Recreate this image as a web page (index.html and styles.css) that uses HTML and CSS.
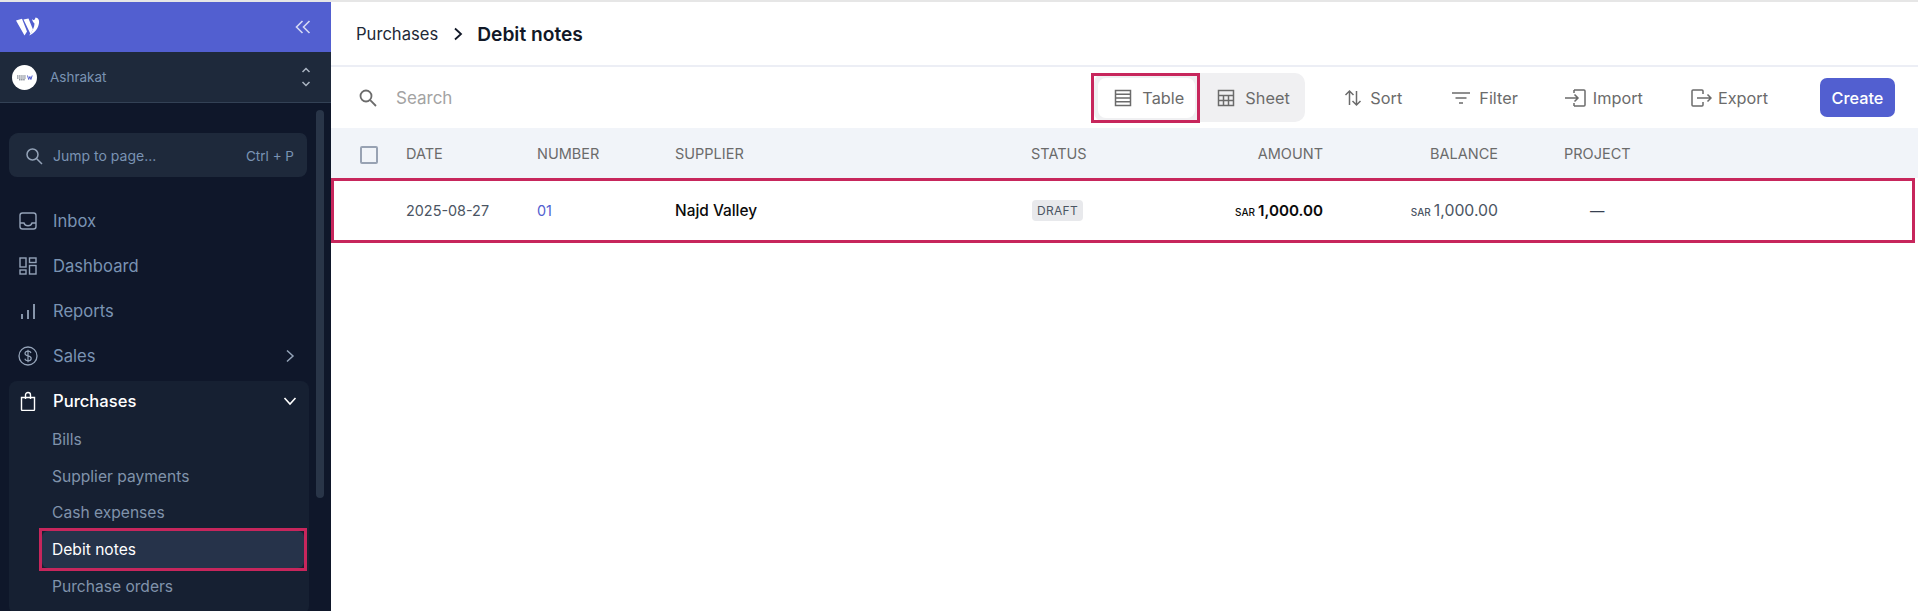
FILE: index.html
```html
<!DOCTYPE html>
<html lang="en">
<head>
  <meta charset="UTF-8" />
  <meta name="viewport" content="width=device-width, initial-scale=1.0"/>
  <title>Debit notes</title>
  <link rel="stylesheet" href="styles.css">
</head>
<body>
<div class="app">

  <!-- Sidebar -->
  <aside class="sidebar">
    <div class="brand">
      <svg class="logo" viewBox="0 0 24 20" width="24" height="20"><path d="M0 3.5 L6 1.800 L11 14.500 L8.500 18.500 Z M7.500 2.500 L12.500 1.500 L17 12.500 L14.500 17 Z" fill="#fff"/><path d="M16 2 C17.500 4 19 3 19.500 .5 C22 1 23.500 2.500 23 6 C22.400 11 19 16 13 18.500 C16.500 14.500 18.500 10 18.500 6.500 C17.500 6 16.300 4 16 2 Z" fill="#fff"/></svg>
      <svg class="collapse" viewBox="0 0 16 14" width="16" height="14"><path d="M7.5 1 L1.5 7 L7.5 13 M14.5 1 L8.5 7 L14.5 13" fill="none" stroke="#d5daf5" stroke-width="1.6"/></svg>
    </div>
    <div class="org">
      <span class="org-avatar">
        <svg viewBox="0 0 25 25" width="25" height="25"><circle cx="12.5" cy="12.5" r="12.5" fill="#fff"/><path d="M5 11h9M5 13h9M7 14.800h6" stroke="#555e6e" stroke-width="1" stroke-dasharray="1.500 .6"/><path d="M15.500 10.500l1.200 4 1.200-3 1 3 1.300-4" fill="none" stroke="#525fd0" stroke-width="1"/></svg>
      </span>
      <span class="org-name">Ashrakat</span>
      <svg class="org-switch" viewBox="0 0 10 22" width="10" height="22"><path d="M1.500 6 L5 2.500 L8.500 6 M1.500 16 L5 19.500 L8.500 16" fill="none" stroke="#aab4c2" stroke-width="1.500"/></svg>
    </div>

    <div class="side-body">
      <div class="scrollbar"></div>
      <div class="jump">
        <svg viewBox="0 0 20 20" width="20" height="20"><circle cx="8.500" cy="8.500" r="5.500" fill="none" stroke="#94a3b8" stroke-width="1.500"/><path d="M12.700 12.700 L18 18" stroke="#94a3b8" stroke-width="1.500"/></svg>
        <span class="jump-text">Jump to page...</span>
        <span class="jump-key">Ctrl + P</span>
      </div>

      <nav class="nav">
        <a class="nav-item">
          <svg viewBox="0 0 20 20" width="20" height="20"><rect x="2" y="2" width="16" height="16" rx="2.500" fill="none" stroke="#94a3b8" stroke-width="1.400"/><path d="M2 12h4c.6 2 2 2.800 4 2.800s3.400-.8 4-2.800h4" fill="none" stroke="#94a3b8" stroke-width="1.400"/></svg>
          <span>Inbox</span>
        </a>
        <a class="nav-item">
          <svg viewBox="0 0 20 20" width="20" height="20"><g fill="none" stroke="#94a3b8" stroke-width="1.400"><rect x="2" y="2" width="6" height="9"/><rect x="11.500" y="2" width="6.500" height="4.500"/><rect x="2" y="14" width="6" height="4"/><rect x="11.500" y="9.500" width="6.500" height="8.500"/></g></svg>
          <span>Dashboard</span>
        </a>
        <a class="nav-item">
          <svg viewBox="0 0 20 20" width="20" height="20"><path d="M4 13v5M10 9v9M16 3v15" stroke="#94a3b8" stroke-width="1.800"/></svg>
          <span>Reports</span>
        </a>
        <a class="nav-item">
          <svg viewBox="0 0 20 20" width="20" height="20"><circle cx="10" cy="10" r="9" fill="none" stroke="#94a3b8" stroke-width="1.300"/><path d="M13 7c-.4-1.200-1.500-1.800-3-1.800-1.800 0-3 .9-3 2.300 0 3.200 6.200 1.600 6.200 4.900 0 1.400-1.300 2.400-3.200 2.400-1.600 0-2.800-.7-3.200-2M10 3.800v12.400" fill="none" stroke="#94a3b8" stroke-width="1.200"/></svg>
          <span>Sales</span>
          <svg class="chev" viewBox="0 0 10 14" width="10" height="14"><path d="M2 1.500 L8 7 L2 12.500" fill="none" stroke="#94a3b8" stroke-width="1.500"/></svg>
        </a>
        <div class="nav-group">
          <a class="nav-item nav-open">
            <svg viewBox="0 0 20 20" width="20" height="20"><path d="M3.500 6.500h13v12a.9.900 0 0 1-.9.900H4.400a.9.900 0 0 1-.9-.9Z" fill="none" stroke="#fff" stroke-width="1.400"/><path d="M7.500 8V4a2.500 2.500 0 0 1 5 0v4" fill="none" stroke="#fff" stroke-width="1.400"/></svg>
            <span>Purchases</span>
            <svg class="chev" viewBox="0 0 14 10" width="14" height="10"><path d="M1.500 2 L7 8 L12.500 2" fill="none" stroke="#fff" stroke-width="1.600"/></svg>
          </a>
          <a class="sub-item">Bills</a>
          <a class="sub-item">Supplier payments</a>
          <a class="sub-item">Cash expenses</a>
          <a class="sub-item active marked">Debit notes</a>
          <a class="sub-item">Purchase orders</a>
        </div>
      </nav>
    </div>
  </aside>

  <!-- Main content -->
  <main class="main">
    <header class="crumbs">
      <span class="crumb">Purchases</span>
      <svg viewBox="0 0 10 14" width="10" height="14"><path d="M2 1.500 L8 7 L2 12.500" fill="none" stroke="#111827" stroke-width="1.800"/></svg>
      <span class="crumb-current">Debit notes</span>
    </header>

    <div class="toolbar">
      <svg class="search-icon" viewBox="0 0 20 20" width="20" height="20"><circle cx="8" cy="8" r="5.500" fill="none" stroke="#6b6b6b" stroke-width="1.800"/><path d="M12.200 12.200 L18 18" stroke="#6b6b6b" stroke-width="1.800"/></svg>
      <span class="search-text">Search</span>

      <div class="view-switch">
        <button class="view-btn selected marked">
          <svg viewBox="0 0 18 18" width="18" height="18"><g fill="none" stroke="#6b6b6b" stroke-width="1.500"><rect x="1.500" y="1.500" width="15" height="15"/><path d="M1.500 5.300h15M1.500 9h15M1.500 12.700h15"/></g></svg>
          Table
        </button>
        <button class="view-btn">
          <svg viewBox="0 0 18 18" width="18" height="18"><g fill="none" stroke="#6b6b6b" stroke-width="1.500"><rect x="1.500" y="1.500" width="15" height="15"/><path d="M1.500 6.500h15M1.500 11.500h15M6.500 6.500v10M11.500 6.500v10"/></g></svg>
          Sheet
        </button>
      </div>

      <button class="tool tool-sort">
        <svg viewBox="0 0 18 20" width="18" height="20"><path d="M5.500 17V3M1.500 7l4-4 4 4M12.500 3v14M8.500 13l4 4 4-4" fill="none" stroke="#6b6b6b" stroke-width="1.500"/></svg>
        Sort
      </button>
      <button class="tool tool-filter">
        <svg viewBox="0 0 18 14" width="18" height="14"><path d="M0 2h18M3.500 7h11M7 12h4" stroke="#6b6b6b" stroke-width="1.600"/></svg>
        Filter
      </button>
      <button class="tool tool-import">
        <svg viewBox="0 0 21 18" width="21" height="18"><path d="M9 1h10a1 1 0 0 1 1 1v14a1 1 0 0 1-1 1H9M9 1v3M9 14v3" fill="none" stroke="#6b6b6b" stroke-width="1.500"/><path d="M0 9h13M9.500 5.500 13 9l-3.500 3.500" fill="none" stroke="#6b6b6b" stroke-width="1.500"/></svg>
        Import
      </button>
      <button class="tool tool-export">
        <svg viewBox="0 0 21 18" width="21" height="18"><path d="M12 5V2a1 1 0 0 0-1-1H2a1 1 0 0 0-1 1v14a1 1 0 0 0 1 1h9a1 1 0 0 0 1-1v-3" fill="none" stroke="#6b6b6b" stroke-width="1.500"/><path d="M6 9h14M16.500 5.500 20 9l-3.500 3.500" fill="none" stroke="#6b6b6b" stroke-width="1.500"/></svg>
        Export
      </button>
      <button class="create-btn">Create</button>
    </div>

    <div class="table-head grid-row">
      <span class="checkbox"></span>
      <span>Date</span>
      <span>Number</span>
      <span>Supplier</span>
      <span>Status</span>
      <span class="right">Amount</span>
      <span class="right">Balance</span>
      <span class="project">Project</span>
    </div>
    <div class="table-row grid-row">
      <span></span>
      <span>2025-08-27</span>
      <span class="doc-number">01</span>
      <span class="supplier">Najd Valley</span>
      <span><span class="badge">DRAFT</span></span>
      <span class="right amount"><small>SAR</small>1,000.00</span>
      <span class="right balance"><small>SAR</small>1,000.00</span>
      <span class="project dash">—</span>
    </div>
  </main>

</div>
</body>
</html>
```

FILE: styles.css
```css
* {
  box-sizing: border-box;
}
html, body {
  margin: 0;
  height: 100%;
  overflow: hidden;
}
body {
  font-family: Inter, 'Liberation Sans', sans-serif;
  background: #fff;
  color: #111827;
  border-top: 2px solid #e6e6e6;
}
.app {
  display: flex;
  height: 609px;
}
svg {
  flex-shrink: 0;
  display: block;
}

/* Red frame drawn over the highlighted items */
.marked {
  position: relative;
}
.marked::after {
  content: "";
  position: absolute;
  border: 3px solid #c7265c;
  pointer-events: none;
}

/* Sidebar */
.sidebar {
  width: 331px;
  flex-shrink: 0;
  background: #0f172a;
  overflow: hidden;
}
.brand {
  height: 50px;
  background: #525fd0;
  display: flex;
  align-items: center;
  justify-content: space-between;
  padding: 0 20px 0 16px;
}
.org {
  height: 51px;
  background: #1e293b;
  border-bottom: 1px solid #334155;
  display: flex;
  align-items: center;
  padding: 0 20px 0 12px;
  color: #7a93b3;
  font-size: 13.500px;
}
.org-avatar {
  width: 25px;
  height: 25px;
  margin-right: 13px;
}
.org-name {
  flex: 1;
  padding-bottom: 1px;
}
.side-body {
  position: relative;
  padding: 31px 24px 0 9px;
}
.scrollbar {
  position: absolute;
  top: 7px;
  right: 7px;
  width: 8px;
  height: 388px;
  background: #293548;
  border-radius: 4px;
}
.jump {
  width: 298px;
  height: 43px;
  background: #1e293b;
  border-radius: 8px;
  display: flex;
  align-items: center;
  padding: 0 13px 0 15px;
  color: #7a93b3;
  font-size: 14px;
  box-shadow: 1px -2px 0 -1px #1e293b;
}
.jump-text {
  flex: 1;
  margin-left: 9px;
}
.jump-key {
  font-size: 13.500px;
}
.nav {
  margin-top: 21px;
  width: 300px;
}
.nav-item {
  height: 45px;
  display: flex;
  align-items: center;
  gap: 15px;
  padding: 0 14px 0 9px;
  color: #7a93b3;
  font-size: 16.600px;
}
.nav-item span {
  flex: 1;
}
.nav-group {
  margin-top: 3px;
  background: #162032;
  border-radius: 8px;
  padding-bottom: 10px;
}
.nav-open {
  height: 40px;
  padding-right: 12px;
  color: #fff;
  font-weight: 500;
}
.sub-item {
  display: flex;
  align-items: center;
  height: 36.700px;
  margin-left: 33px;
  margin-right: 5px;
  padding-left: 10px;
  color: #8093ab;
  font-size: 15.600px;
}
.sub-item.active {
  background: #26334a;
  color: #fff;
  border-radius: 6px;
}
.sub-item.marked::after {
  inset: -3px;
}

/* Main */
.main {
  flex: 1;
  min-width: 0;
}
.crumbs {
  height: 65px;
  border-bottom: 2px solid #eceef5;
  display: flex;
  align-items: center;
  padding: 0 25px;
  font-size: 16.600px;
}
.crumb {
  color: #1f2937;
}
.crumbs svg {
  margin: 0 14px 0 15px;
}
.crumb-current {
  font-size: 19.200px;
  font-weight: 600;
}
.toolbar {
  height: 61px;
  display: flex;
  align-items: center;
  padding: 0 23px 0 27px;
  font-size: 16.300px;
}
.search-icon {
  margin-right: 18px;
}
.search-text {
  flex: 1;
  color: #a3a3a3;
  font-size: 17px;
}
.view-switch {
  display: flex;
  align-items: center;
  width: 211px;
  height: 49px;
  padding: 0 4px;
  background: #f0f0f2;
  border-radius: 10px;
  margin-right: 39px;
}
button {
  font: inherit;
  border: none;
  background: none;
  padding: 0;
  color: #6b6b6b;
  display: flex;
  align-items: center;
  white-space: nowrap;
}
.view-btn {
  height: 40px;
  gap: 10px;
  padding: 0 16px;
  border-radius: 8px;
}
.view-btn.selected {
  background: #fff;
  width: 97px;
  margin-right: 6px;
}
.view-btn.marked::after {
  inset: -5px -5px -5px -7px;
}
.tool {
  gap: 8px;
}
.tool-sort {
  margin-right: 50px;
}
.tool-filter {
  gap: 9px;
  margin-right: 47px;
}
.tool-import {
  gap: 7px;
  margin-right: 48px;
}
.tool-export {
  gap: 6px;
  margin-right: 52px;
}
.create-btn {
  width: 75px;
  height: 39px;
  justify-content: center;
  background: #525fd0;
  color: #fff;
  border-radius: 7px;
  font-weight: 500;
}

/* Table */
.grid-row {
  display: grid;
  grid-template-columns: 75px 131px 138px 356px 101px 191px 175px 1fr;
  align-items: center;
}
.table-head {
  height: 50px;
  background: #f1f4f9;
  color: #6b6b6b;
  font-size: 14.500px;
  text-transform: uppercase;
}
.project {
  margin-left: 66px;
}
.checkbox {
  width: 18px;
  height: 18px;
  margin-top: 3px;
  margin-left: 29px;
  border: 2px solid #98a2b3;
  border-radius: 2px;
}
.right {
  text-align: right;
}
.table-row {
  height: 65px;
  font-size: 14.400px;
  color: #4b5563;
  outline: 3px solid #c7265c;
  outline-offset: -3px;
  margin-right: 3px;
}
.doc-number {
  color: #525fd0;
}
.supplier {
  color: #0a0a0a;
  font-size: 15.400px;
  font-weight: 500;
}
.badge {
  display: inline-block;
  padding: 3px 5px;
  margin-left: 1px;
  background: #e8e9ec;
  border-radius: 4px;
  font-size: 12px;
  color: #4b5563;
  letter-spacing: .3px;
}
.amount {
  color: #0a0a0a;
  font-size: 15.200px;
  font-weight: 600;
}
.balance {
  font-size: 15.800px;
}
.right small {
  font-size: 10px;
  margin-right: 3px;
  font-weight: 500;
}
.dash {
  padding-left: 26px;
  color: #374151;
}
```
